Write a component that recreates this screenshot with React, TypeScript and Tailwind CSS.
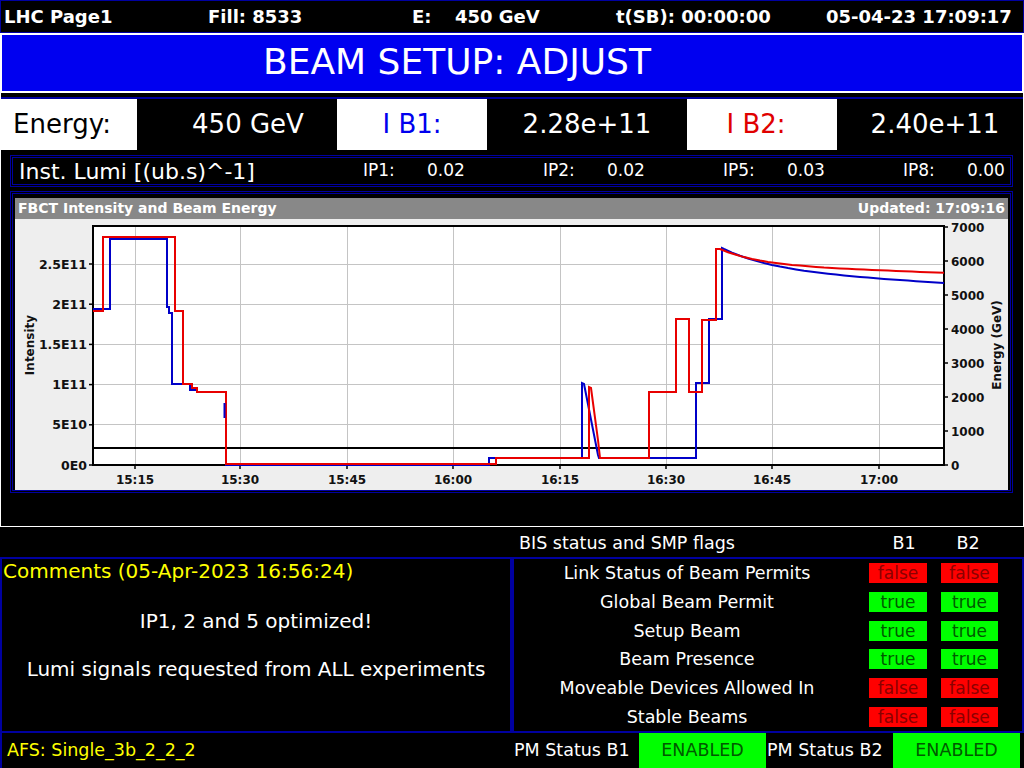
import React from 'react';

const timeTicks = [
  { x: 135, l: '15:15' },
  { x: 240, l: '15:30' },
  { x: 347, l: '15:45' },
  { x: 453, l: '16:00' },
  { x: 560, l: '16:15' },
  { x: 666, l: '16:30' },
  { x: 772, l: '16:45' },
  { x: 879, l: '17:00' },
];
const intTicks = ['0E0', '5E10', '1E11', '1.5E11', '2E11', '2.5E11'];
const energyTicks = ['0', '1000', '2000', '3000', '4000', '5000', '6000', '7000'];

function decay(x0: number, x1: number, f: (x: number) => number) {
  const pts: string[] = [];
  for (let x = x0; x <= x1; x += 8) pts.push(`L${x},${f(x).toFixed(1)}`);
  pts.push(`L${x1},${f(x1).toFixed(1)}`);
  return pts.join(' ');
}

const bluePath =
  'M93,309 H110 V239 H167 V307 H169 V313 H172 V384 H190 V390 H197 V392 H226 V465 H489 V458 H582 V383 L584,384 L598,455 L599,458 H696 V383 H709 V319 H722 V248 ' +
  decay(724, 944, (x) => 248 + 22 * (1 - Math.exp(-(x - 722) / 50)) + 0.06 * (x - 722));

const redPath =
  'M93,311 H103 V237 H175 V311 H183 V384 H192 V388 H197 V392 H226 V464 H496 V458 H589 V387 L591,388 L598,440 L600,458 H649 V392 H676 V319 H689 V392 H702 V320 H716 V249 H720 ' +
  decay(720, 944, (x) => 249 + 16 * (1 - Math.exp(-(x - 720) / 40)) + 0.035 * (x - 720));

function Chart() {
  return (
    <svg width={993} height={271} viewBox="15 219 993 271" className="block" fontFamily="DejaVu Sans, sans-serif">
      <rect x={15} y={219} width={993} height={271} fill="#eeeeee" />
      <rect x={93} y={226} width={851} height={239} fill="#ffffff" />
      {/* grid */}
      {timeTicks.map((t) => (
        <line key={t.x} x1={t.x} y1={226} x2={t.x} y2={465} stroke="#c4c4c4" strokeWidth={1} shapeRendering="crispEdges" />
      ))}
      {intTicks.map((_, i) =>
        i === 0 ? null : (
          <line key={i} x1={93} y1={465 - i * 40.2} x2={944} y2={465 - i * 40.2} stroke="#c4c4c4" strokeWidth={1} shapeRendering="crispEdges" />
        )
      )}
      {/* axes */}
      <rect x={93} y={226} width={851} height={239} fill="none" stroke="#000" strokeWidth={1.5} shapeRendering="crispEdges" />
      {intTicks.map((l, i) => (
        <g key={l}>
          <line x1={89} y1={465 - i * 40.2} x2={93} y2={465 - i * 40.2} stroke="#000" strokeWidth={1.5} />
          <text x={87} y={465 - i * 40.2 + 4.5} textAnchor="end" fontSize={12.5} fontWeight="bold" fill="#111">
            {l}
          </text>
        </g>
      ))}
      {energyTicks.map((l, i) => (
        <g key={l}>
          <line x1={944} y1={465 - i * 34} x2={948} y2={465 - i * 34} stroke="#000" strokeWidth={1.5} />
          <text x={951} y={465 - i * 34 + 4.5} fontSize={12} fontWeight="bold" fill="#111">
            {l}
          </text>
        </g>
      ))}
      {timeTicks.map((t) => (
        <g key={t.l}>
          <line x1={t.x} y1={465} x2={t.x} y2={469} stroke="#000" strokeWidth={1.5} />
          <text x={t.x} y={484} textAnchor="middle" fontSize={12} fontWeight="bold" fill="#111">
            {t.l}
          </text>
        </g>
      ))}
      <text transform="translate(34,345) rotate(-90)" textAnchor="middle" fontSize={12} fontWeight="bold" fill="#111">
        Intensity
      </text>
      <text transform="translate(1001,345) rotate(-90)" textAnchor="middle" fontSize={12} fontWeight="bold" fill="#111">
        Energy (GeV)
      </text>
      {/* energy */}
      <line x1={93} y1={448} x2={944} y2={448} stroke="#000" strokeWidth={2} />
      {/* beams */}
      <path d={bluePath} fill="none" stroke="#0000c8" strokeWidth={2} />
      <path d={redPath} fill="none" stroke="#e80000" strokeWidth={2} />
      <line x1={224.5} y1={403} x2={224.5} y2={418} stroke="#0000c8" strokeWidth={2} />
    </svg>
  );
}

const flags = [
  { label: 'Link Status of Beam Permits', v: false },
  { label: 'Global Beam Permit', v: true },
  { label: 'Setup Beam', v: true },
  { label: 'Beam Presence', v: true },
  { label: 'Moveable Devices Allowed In', v: false },
  { label: 'Stable Beams', v: false },
];

function Flag({ v, w }: { v: boolean; w: string }) {
  return (
    <div
      className={`${w} h-[20px] text-center text-[17px] leading-[20px] ${
        v ? 'bg-[#00ff00] text-[#005a00]' : 'bg-[#ff0000] text-[#8a0000]'
      }`}
    >
      {v ? 'true' : 'false'}
    </div>
  );
}

export default function App() {
  return (
    <div className="w-[1024px] h-[768px] overflow-hidden bg-black text-white font-['DejaVu_Sans',sans-serif] flex flex-col">
      {/* top bar */}
      <div className="h-[33px] border border-[#0000a0] flex items-center text-[18px] font-bold whitespace-nowrap">
        <span className="w-[207px] pl-[3px]">LHC Page1</span>
        <span className="w-[204px]">Fill: 8533</span>
        <span className="w-[43px]">E:</span>
        <span className="w-[161px]">450 GeV</span>
        <span className="w-[210px]">t(SB): 00:00:00</span>
        <span>05-04-23 17:09:17</span>
      </div>

      {/* mode */}
      <div className="h-[60px] border-2 border-white bg-[#0000f0] flex items-center pl-[261px] pb-[2px] text-[36px] whitespace-nowrap">
        BEAM SETUP: ADJUST
      </div>

      {/* main */}
      <div className="h-[434px] border-x border-b border-white pt-[4px] flex flex-col">
        <div className="h-[53px] border-t-2 border-[#0000a0] flex text-[26px] whitespace-nowrap">
          <div className="w-[136px] bg-white text-black flex items-center pl-[12px]">Energy:</div>
          <div className="w-[200px] flex items-center justify-center pl-[22px]">450 GeV</div>
          <div className="w-[150px] bg-white text-[#0000ee] flex items-center justify-center">I B1:</div>
          <div className="w-[200px] flex items-center justify-center">2.28e+11</div>
          <div className="w-[150px] bg-white text-[#e00000] flex items-center justify-center pr-[12px]">I B2:</div>
          <div className="flex-1 flex items-center justify-center pl-[10px]">2.40e+11</div>
        </div>

        <div className="mt-[5px] ml-[9px] mr-[10px] h-[32px] border-[3px] border-double border-[#0000a0] flex items-center whitespace-nowrap">
          <div className="w-[350px] shrink-0 pl-[6px] text-[22px]">Inst. Lumi [(ub.s)^-1]</div>
          {[
            ['IP1:', '0.02'],
            ['IP2:', '0.02'],
            ['IP5:', '0.03'],
            ['IP8:', '0.00'],
          ].map(([k, v], i) => (
            <div key={k} className={`${i < 3 ? 'w-[180px] shrink-0' : 'flex-1'} flex text-[17px]`}>
              <span className="w-[64px] shrink-0">{k}</span>
              <span>{v}</span>
            </div>
          ))}
        </div>

        <div className="mt-[4px] ml-[9px] mr-[10px] h-[302px] border-[3px] border-double border-[#0000a0] pt-[4px] px-[2px]">
          <div className="h-[21px] bg-[#888888] flex items-center justify-between px-[3px] text-[14px] font-bold">
            <span>FBCT Intensity and Beam Energy</span>
            <span>Updated: 17:09:16</span>
          </div>
          <Chart />
        </div>
      </div>

      {/* BIS header */}
      <div className="h-[30px] flex items-center text-[17.5px] pt-[2px]">
        <div className="w-[512px]" />
        <div className="w-[364px] pl-[7px]">BIS status and SMP flags</div>
        <div className="w-[56px] text-center">B1</div>
        <div className="w-[72px] text-center">B2</div>
      </div>

      {/* comments + flags */}
      <div className="h-[176px] flex">
        <div className="w-[512px] border-2 border-[#0000a0] flex flex-col">
          <div className="pl-[1px] text-[20px] leading-[24px] text-[#ffff00] whitespace-nowrap">
            Comments (05-Apr-2023 16:56:24)
          </div>
          <div className="flex flex-col items-center text-[20px] leading-[24px] whitespace-nowrap">
            <div className="mt-[26px]">IP1, 2 and 5 optimized!</div>
            <div className="mt-[24px]">Lumi signals requested from ALL experiments</div>
          </div>
        </div>
        <div className="flex-1 border-2 border-[#0000a0] flex flex-col">
          {flags.map((f) => (
            <div key={f.label} className="h-[28.8px] flex items-center">
              <div className="w-[346px] text-center text-[17.5px] whitespace-nowrap">{f.label}</div>
              <div className="ml-[9px]">
                <Flag v={f.v} w="w-[58px]" />
              </div>
              <div className="ml-[14px]">
                <Flag v={f.v} w="w-[57px]" />
              </div>
            </div>
          ))}
        </div>
      </div>

      {/* bottom */}
      <div className="h-[35px] flex text-[17.5px] whitespace-nowrap">
        <div className="w-[512px] border-l-2 border-[#0000a0] flex items-center pl-[5px] text-[#ffff00]">
          AFS: Single_3b_2_2_2
        </div>
        <div className="w-[127px] flex items-center pl-[2px]">PM Status B1</div>
        <div className="w-[127px] bg-[#00ff00] text-[#005a00] flex items-center justify-center">ENABLED</div>
        <div className="w-[127px] flex items-center pl-[1px]">PM Status B2</div>
        <div className="w-[127px] bg-[#00ff00] text-[#005a00] flex items-center justify-center">ENABLED</div>
        <div className="flex-1" />
      </div>
    </div>
  );
}
